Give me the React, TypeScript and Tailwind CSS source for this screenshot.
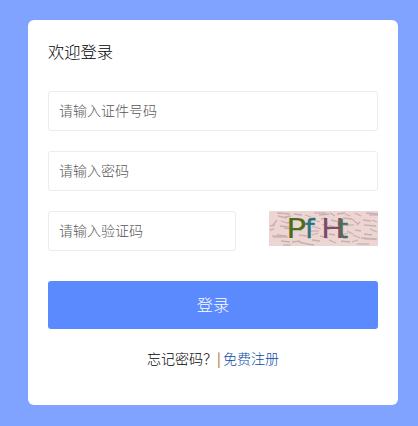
import { useState } from 'react';

const font = "font-['Noto_Sans_CJK_SC',sans-serif]";
const inputClass =
  'h-10 rounded-[3px] border border-[#ececec] bg-white px-2.5 pb-[3px] text-[14px] font-light text-[#333] outline-none placeholder:text-[#555] placeholder:opacity-100';

// Noise strokes behind the captcha letters: x, y, dx, dy
const noise = [
  [8, 2, 13, 1], [45, 2, 12, 0], [50, 4, 10, -1], [61, 2, 5, 3], [68, 3, 8, -1], [76, 3, 5, 2], [86, 2, 6, 3], [97, 2, 12, 1], [100, 4, 9, 0],
  [9, 5, 9, 2], [16, 6, 6, -1], [25, 3, 8, 1], [36, 4, 6, 2], [74, 7, 9, 1],
  [4, 14, 4, -5], [1, 15, 5, -1], [12, 10, 6, 2], [18, 12, 4, -1], [44, 9, 7, 2], [52, 8, 5, -1], [62, 9, 8, 2], [83, 8, 6, 5], [94, 9, 8, 1], [103, 9, 5, 2],
  [11, 15, 9, 1], [15, 17, 8, 1], [43, 15, 9, 3], [53, 14, 6, -2], [60, 14, 5, 2], [77, 14, 8, 0], [88, 14, 3, -3], [95, 14, 12, 1],
  [1, 19, 4, -1], [25, 17, 8, 3], [42, 20, 8, 0], [58, 19, 6, -2], [78, 20, 6, 3], [86, 19, 6, 1], [101, 18, 7, 3],
  [8, 24, 9, 1], [30, 24, 8, 1], [43, 24, 6, -2], [51, 25, 8, 2], [60, 23, 6, 1], [72, 24, 7, -2], [84, 24, 7, 3], [95, 23, 8, 1],
  [3, 25, 15, 0], [4, 26, 15, 0], [12, 30, 9, 1], [23, 31, 8, -1], [30, 31, 8, 2], [43, 29, 8, 1], [60, 29, 7, 3], [72, 30, 9, 1], [83, 31, 6, -2], [92, 27, 15, 1], [95, 28, 13, 0],
  [14, 34, 8, 0], [38, 33, 7, 1], [88, 33, 12, 0],
];

function Captcha() {
  return (
    <svg width="109" height="35" viewBox="0 0 109 35">
      <rect width="109" height="35" fill="#edd6d1" />
      {noise.map(([x, y, dx, dy], i) => (
        <path key={i} d={`M${x} ${y}l${dx} ${dy}`} stroke="#c6b0b5" strokeWidth="1.3" />
      ))}
      <g fontFamily="DejaVu Sans" fontSize="27">
        <text transform="translate(17 27) scale(1.25 1)" fill="#4b6d1d">P</text>
        <text x="36" y="27" fill="#25737d" stroke="#25737d" strokeWidth="0.5">f</text>
        <text transform="translate(52 27) scale(1.15 1)" fill="#7b4b6b">H</text>
        <text x="68.5" y="27" fill="#526c58" stroke="#526c58" strokeWidth="0.6">t</text>
      </g>
    </svg>
  );
}

export default function App() {
  const [form, setForm] = useState({ id: '', password: '', code: '' });

  return (
    <div className={`flex h-screen bg-[#7fa3ff] pt-5 pl-7 ${font}`}>
      <form className="flex h-[385px] w-[370px] flex-col rounded-md bg-white px-5" onSubmit={(e) => e.preventDefault()}>
        <h1 className="mt-[19px] mb-[28px] text-[16.3px] leading-6 font-light text-black">欢迎登录</h1>

        <div className="flex flex-col gap-5">
          <input
            className={inputClass}
            placeholder="请输入证件号码"
            value={form.id}
            onChange={(e) => setForm({ ...form, id: e.target.value })}
          />
          <input
            className={inputClass}
            type="password"
            placeholder="请输入密码"
            value={form.password}
            onChange={(e) => setForm({ ...form, password: e.target.value })}
          />
          <div className="flex items-start justify-between">
            <input
              className={`${inputClass} w-[188px]`}
              placeholder="请输入验证码"
              value={form.code}
              onChange={(e) => setForm({ ...form, code: e.target.value })}
            />
            <Captcha />
          </div>
        </div>

        <button type="submit" className="mt-[30px] h-12 rounded-[3px] bg-[#5b8aff] pb-0.5 text-[16.3px] font-light text-white">
          登录
        </button>

        <div className="mt-[19px] flex justify-center text-[14px] leading-5 font-light">
          <a href="#" className="text-black">忘记密码？</a>
          <span className="mr-0.5 font-normal text-[#a85a14]">|</span>
          <a href="#" className="text-[#0b4ba8]">免费注册</a>
        </div>
      </form>
    </div>
  );
}
